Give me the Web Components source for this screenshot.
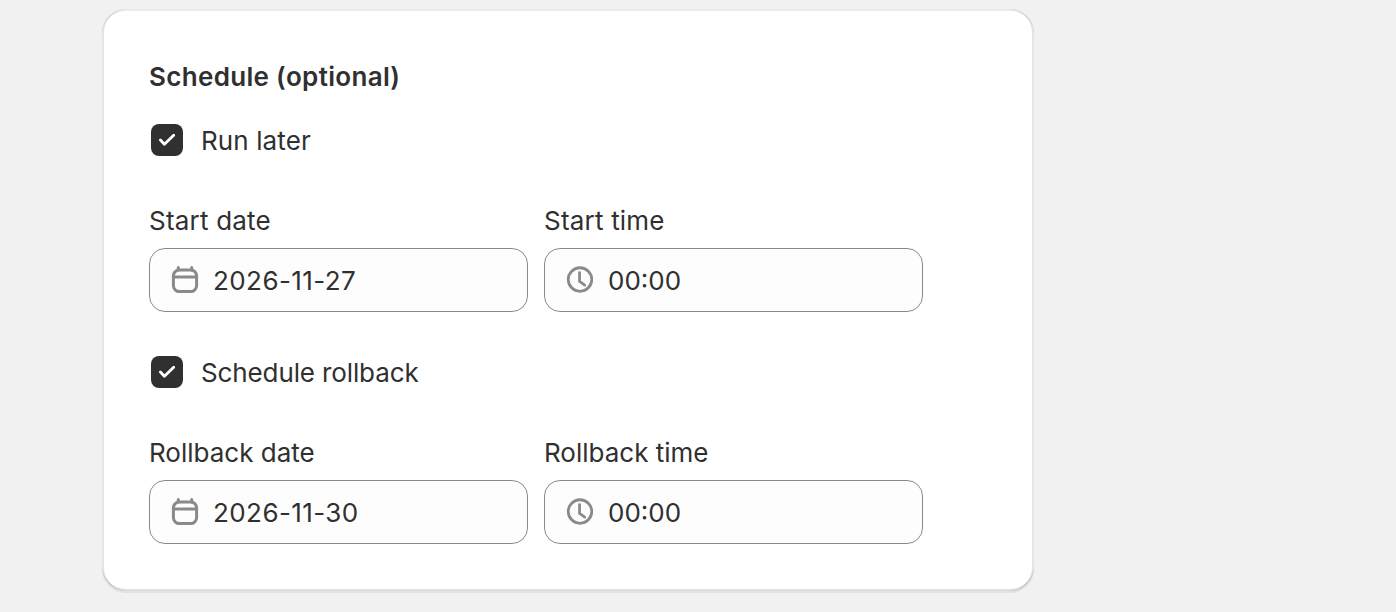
<!DOCTYPE html>
<html>
<head>
<meta charset="utf-8">
<style>
  html, body { margin: 0; height: 100%; background: #f1f1f1; overflow: hidden; }
  body {
    padding: 9px 0 0 102px;
    box-sizing: border-box;
    font-family: Inter, "Liberation Sans", sans-serif;
    font-optical-sizing: none;
    font-variation-settings: "opsz" 14;
    color: #303030;
  }
</style>
</head>
<body>
<schedule-card heading="Schedule (optional)">
  <check-row style="letter-spacing:.1px">Run later</check-row>
  <field-pair>
    <text-field label="Start date" value="2026-11-27" icon="calendar" style="letter-spacing:.2px"></text-field>
    <text-field label="Start time" value="00:00" icon="clock" style="letter-spacing:.2px"></text-field>
  </field-pair>
  <check-row style="letter-spacing:-.12px">Schedule rollback</check-row>
  <field-pair>
    <text-field label="Rollback date" value="2026-11-30" icon="calendar"></text-field>
    <text-field label="Rollback time" value="00:00" icon="clock"></text-field>
  </field-pair>
</schedule-card>

<script>
class schedule_card extends HTMLElement {
  constructor() {
    super();
    const shadow = this.attachShadow({ mode: 'open' });
    shadow.innerHTML = `
      <style>
        :host {
          display: block;
          width: 932px;
          height: 582px;
          box-sizing: border-box;
          padding: 50px 47px 0 47px;
          background: #fff;
          border-radius: 24px;
          box-shadow:
            inset 2px 0 0 rgba(0,0,0,.1),
            inset -2px 0 0 rgba(0,0,0,.1),
            inset 0 -2px 0 rgba(0,0,0,.13),
            inset 0 2px 0 rgba(204,204,204,.4),
            0 2px 0 rgba(26,26,26,.07);
        }
        h2 {
          margin: 0;
          font-size: 26px;
          line-height: 36px;
          font-weight: 600;
          letter-spacing: .32px;
          color: #303030;
        }
      </style>
      <h2></h2>
      <slot></slot>
    `;
    shadow.querySelector('h2').textContent = this.getAttribute('heading');
  }
}

class check_row extends HTMLElement {
  constructor() {
    super();
    const shadow = this.attachShadow({ mode: 'open' });
    shadow.innerHTML = `
      <style>
        :host {
          display: flex;
          align-items: center;
          height: 32px;
          margin-top: 29px;
          padding-left: 2px;
          font-size: 26px;
          line-height: 34px;
          color: #303030;
        }
        :host(:nth-of-type(2)) { margin-top: 44px; }
        .box {
          width: 32px;
          height: 32px;
          flex: none;
          margin-right: 18px;
          border-radius: 8px;
          background: #303030;
          display: flex;
          align-items: center;
          justify-content: center;
        }
        .text { padding-top: 2px; }
      </style>
      <span class="box">
        <svg width="18" height="18" viewBox="0 0 18 18" fill="none">
          <path d="M2.4 9 L6.4 13.2 L15.7 4.3" stroke="#fff" stroke-width="2.8" stroke-linecap="round" stroke-linejoin="round"/>
        </svg>
      </span>
      <span class="text"><slot></slot></span>
    `;
  }
}

class field_pair extends HTMLElement {
  constructor() {
    super();
    const shadow = this.attachShadow({ mode: 'open' });
    shadow.innerHTML = `
      <style>
        :host {
          display: grid;
          grid-template-columns: 379px 379px;
          column-gap: 16px;
          margin-top: 49px;
        }
      </style>
      <slot></slot>
    `;
  }
}

const ICONS = {
  calendar: `<svg width="28" height="28" viewBox="0 -3 28 28" overflow="visible" fill="none" stroke="#8a8a8a" stroke-width="3" stroke-linecap="round">
      <rect x="2.4" y=".9" width="23.2" height="21.7" rx="6"/>
      <path d="M2.4 8 H25.6"/>
      <path d="M7.3 -1.6 V.9 M20.7 -1.6 V.9"/>
    </svg>`,
  clock: `<svg width="30" height="30" viewBox="0 0 30 30" fill="none" stroke="#8a8a8a" stroke-width="3" stroke-linecap="round" stroke-linejoin="round">
      <circle cx="15" cy="14.5" r="12.6"/>
      <path d="M14.5 7.2 V16.4 L20 20.5"/>
    </svg>`
};

class text_field extends HTMLElement {
  constructor() {
    super();
    const shadow = this.attachShadow({ mode: 'open' });
    shadow.innerHTML = `
      <style>
        :host { display: block; font-size: 26px; color: #303030; }
        label { display: block; line-height: 32px; margin-bottom: 11px; }
        .input {
          display: flex;
          align-items: center;
          height: 64px;
          box-sizing: border-box;
          background: #fdfdfd;
          border: 1px solid #8a8a8a;
          border-radius: 16px;
          padding-left: 21px;
          letter-spacing: 0;
        }
        .icon { display: flex; width: 28px; justify-content: center; margin-right: 14px; }
        .value { line-height: 32px; padding-top: 1px; }
        :host([icon="calendar"]) .value { letter-spacing: .42px; }
      </style>
      <label></label>
      <div class="input">
        <span class="icon"></span>
        <span class="value"></span>
      </div>
    `;
    shadow.querySelector('label').textContent = this.getAttribute('label');
    shadow.querySelector('.value').textContent = this.getAttribute('value');
    shadow.querySelector('.icon').innerHTML = ICONS[this.getAttribute('icon')];
  }
}

customElements.define('schedule-card', schedule_card);
customElements.define('check-row', check_row);
customElements.define('field-pair', field_pair);
customElements.define('text-field', text_field);
</script>
</body>
</html>
